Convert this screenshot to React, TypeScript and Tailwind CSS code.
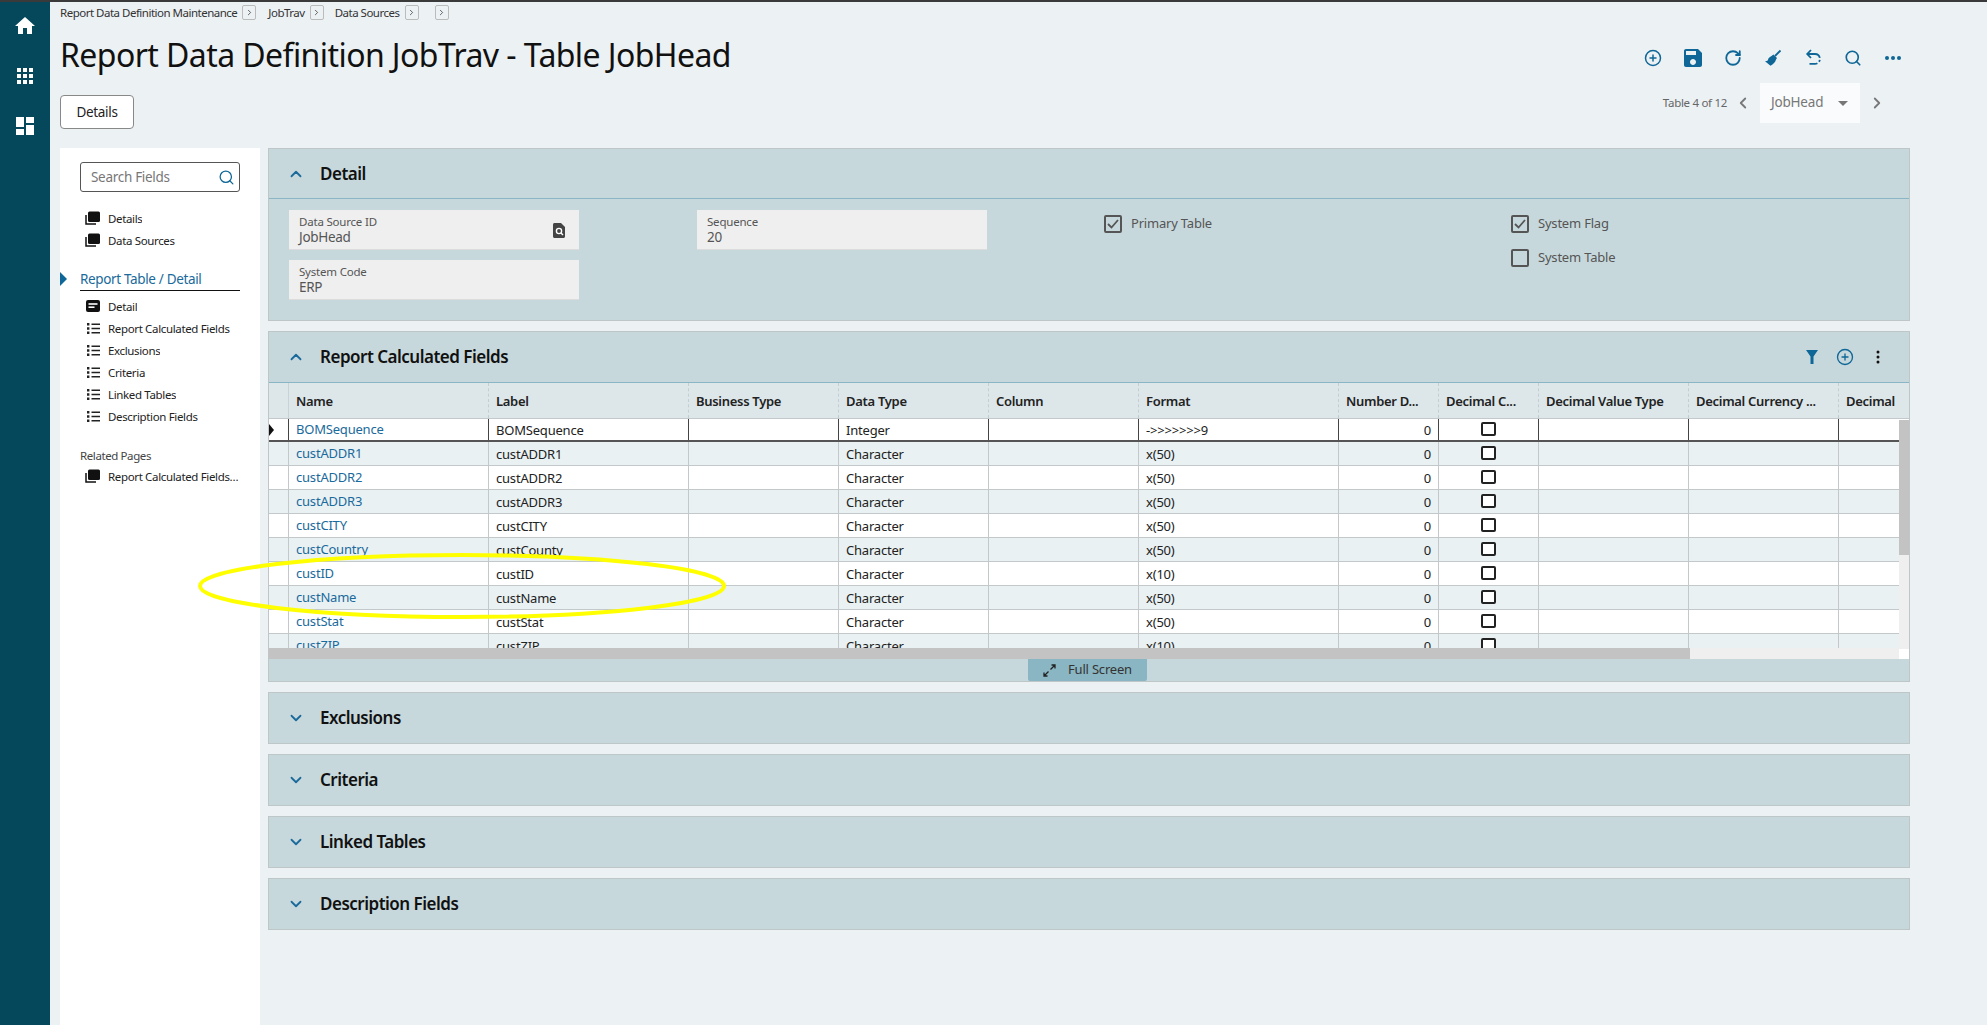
import { CirclePlus, RotateCw, Search, ChevronUp, ChevronDown, ChevronLeft, ChevronRight } from "lucide-react";

const rows = [
  { name: "BOMSequence", label: "BOMSequence", type: "Integer", format: "->>>>>>>9" },
  { name: "custADDR1", label: "custADDR1", type: "Character", format: "x(50)" },
  { name: "custADDR2", label: "custADDR2", type: "Character", format: "x(50)" },
  { name: "custADDR3", label: "custADDR3", type: "Character", format: "x(50)" },
  { name: "custCITY", label: "custCITY", type: "Character", format: "x(50)" },
  { name: "custCountry", label: "custCounty", type: "Character", format: "x(50)" },
  { name: "custID", label: "custID", type: "Character", format: "x(10)" },
  { name: "custName", label: "custName", type: "Character", format: "x(50)" },
  { name: "custStat", label: "custStat", type: "Character", format: "x(50)" },
  { name: "custZIP", label: "custZIP", type: "Character", format: "x(10)" },
];

const headers = ["Name", "Label", "Business Type", "Data Type", "Column", "Format", "Number D...", "Decimal C...", "Decimal Value Type", "Decimal Currency ..."];

const gridCols = "grid grid-cols-[20px_200px_200px_150px_150px_150px_200px_100px_100px_150px_150px_130px]";

function StackIcon() {
  return (
    <svg width="16" height="14" viewBox="0 0 16 14" className="shrink-0">
      <path d="M1 4v9h10" fill="none" stroke="#111" strokeWidth="1.5" />
      <rect x="3" y="0.5" width="12" height="10.5" rx="1.5" fill="#111" />
    </svg>
  );
}

function CardIcon() {
  return (
    <svg width="14" height="12" viewBox="0 0 14 12" className="shrink-0 ml-[1px] mr-[1px]">
      <rect width="14" height="12" rx="2" fill="#111" />
      <rect x="2.5" y="3.2" width="9" height="1.6" fill="#fff" />
      <rect x="2.5" y="6.4" width="6" height="1.6" fill="#fff" />
    </svg>
  );
}

function ListIcon() {
  return (
    <svg width="13" height="11" viewBox="0 0 13 11" className="shrink-0 ml-[2px] mr-[1px]">
      <path d="M0 0h2.4v2.4H0zM0 4.3h2.4v2.4H0zM0 8.6h2.4V11H0z" fill="#222" />
      <path d="M4.5 .4H13v1.5H4.5zM4.5 4.7H13v1.5H4.5zM4.5 9H13v1.5H4.5z" fill="#222" />
    </svg>
  );
}

function NavItem({ icon, text }: { icon: React.ReactNode; text: string }) {
  return (
    <div className="flex items-center h-[22px] pl-[25px] gap-[7px] text-[11.5px] text-[#222] tracking-[-0.35px]">
      {icon}
      <span className="truncate pt-[1px]">{text}</span>
    </div>
  );
}

function Crumb({ text, className }: { text?: string; className?: string }) {
  return (
    <div className={`flex items-center gap-[5px] ${className ?? ""}`}>
      {text && <span className="pt-[1px] text-[11.5px] text-[#333] tracking-[-0.5px]">{text}</span>}
      <span className="flex items-center justify-center w-[14px] h-[15px] border border-[#bbb] rounded-[2px]">
        <ChevronRight size={9} strokeWidth={2} className="text-[#333]" />
      </span>
    </div>
  );
}

function Field({ label, value, lookup, className }: { label: string; value: string; lookup?: boolean; className?: string }) {
  return (
    <div className={`relative flex flex-col justify-center w-[290px] h-[40px] bg-[#efefef] border-b border-[#dcdcdc] pl-[10px] pt-[1px] ${className ?? ""}`}>
      <span className="text-[11.5px] leading-[15px] text-[#555] tracking-[-0.2px]">{label}</span>
      <span className="text-[13.5px] leading-[17px] text-[#555] tracking-[-0.3px]">{value}</span>
      {lookup && (
        <svg width="12" height="15" viewBox="0 0 12 15" className="absolute right-[14px] top-[13px]">
          <path d="M0 1.5C0 .7.7 0 1.5 0H8l4 4v9.5c0 .8-.7 1.5-1.5 1.5h-9C.7 15 0 14.3 0 13.5z" fill="#444" />
          <circle cx="6" cy="8" r="2.6" fill="none" stroke="#fff" strokeWidth="1.4" />
          <path d="M8 10l2 2" stroke="#fff" strokeWidth="1.4" />
        </svg>
      )}
    </div>
  );
}

function Check({ label, checked, className }: { label: string; checked?: boolean; className?: string }) {
  return (
    <div className={`flex items-center gap-[9px] ${className ?? ""}`}>
      <span className="flex items-center justify-center w-[18px] h-[18px] border-2 border-[#555] rounded-[2px]">
        {checked && (
          <svg width="12" height="10" viewBox="0 0 12 10">
            <path d="M1 5l3.5 3.5L11 1" fill="none" stroke="#555" strokeWidth="1.8" />
          </svg>
        )}
      </span>
      <span className="text-[13px] text-[#555] tracking-[-0.2px]">{label}</span>
    </div>
  );
}

function PanelHead({ title, open, height }: { title: string; open?: boolean; height?: string }) {
  return (
    <div className={`flex items-center pl-[18px] ${height ?? "h-[50px]"}`}>
      {open ? <ChevronUp size={18} strokeWidth={2.4} className="text-[#1a6a9c]" /> : <ChevronDown size={18} strokeWidth={2.4} className="text-[#1a6a9c]" />}
      <span className="ml-[15px] text-[17px] font-semibold text-[#111] tracking-[-0.5px]">{title}</span>
    </div>
  );
}

function Collapsed({ title }: { title: string }) {
  return (
    <div className="h-[52px] bg-[#c7d8dc] border border-[#bfc6c8]">
      <PanelHead title={title} />
    </div>
  );
}

export default function App() {
  return (
    <div className="relative flex w-[1987px] h-[1025px] overflow-hidden bg-[#ecf1f4] border-t-2 border-[#3a3a3a] font-['Noto_Sans',sans-serif]">
      <aside className="flex flex-col items-center w-[50px] shrink-0 bg-[#05485b] pt-[12px] gap-[27px] text-white">
        <svg width="24" height="24" viewBox="0 0 24 24" fill="#fff"><path d="M10 20v-6h4v6h5v-8h3L12 3 2 12h3v8z" /></svg>
        <svg width="24" height="24" viewBox="0 0 24 24" fill="#fff" className="mt-[-1px]"><path d="M4 8h4V4H4v4zm6 12h4v-4h-4v4zm-6 0h4v-4H4v4zm0-6h4v-4H4v4zm6 0h4v-4h-4v4zm6-10v4h4V4h-4zm-6 4h4V4h-4v4zm6 6h4v-4h-4v4zm0 6h4v-4h-4v4z" /></svg>
        <svg width="24" height="24" viewBox="0 0 24 24" fill="#fff" className="mt-[-1px]"><path d="M3 13h8V3H3v10zm0 8h8v-6H3v6zm10 0h8V11h-8v10zm0-18v6h8V3h-8z" /></svg>
      </aside>

      <main className="flex-1 flex flex-col pl-[10px]">
        <header className="flex justify-between h-[146px] shrink-0">
          <div>
            <div className="flex items-center h-[15px] mt-[3px]">
              <Crumb text="Report Data Definition Maintenance" />
              <Crumb text="JobTrav" className="ml-[12px]" />
              <Crumb text="Data Sources" className="ml-[11px]" />
              <Crumb className="ml-[16px]" />
            </div>
            <h1 className="mt-[14px] text-[32px] leading-[42px] text-[#111] tracking-[-0.58px]">Report Data Definition JobTrav - Table JobHead</h1>
            <button className="mt-[19px] w-[74px] h-[34px] bg-white border border-[#888] rounded-[4px] text-[13.5px] text-[#222] tracking-[-0.3px]">Details</button>
          </div>
          <div className="flex flex-col items-end pr-[85px]">
            <div className="flex items-center gap-[22px] mt-[46px] h-[20px] text-[#0f6797]">
              <CirclePlus size={18} strokeWidth={2} />
              <svg width="18" height="18" viewBox="3 3 18 18" fill="#0f6797"><path d="M17 3H5c-1.11 0-2 .9-2 2v14c0 1.1.89 2 2 2h14c1.1 0 2-.9 2-2V7l-4-4zm-5 16c-1.66 0-3-1.34-3-3s1.34-3 3-3 3 1.34 3 3-1.34 3-3 3zm3-10H5V5h10v4z" /></svg>
              <RotateCw size={18} strokeWidth={2.4} />
              <svg width="18" height="18" viewBox="0 0 18 18" fill="#0f6797">
                <path d="M16.5 1.5L11 7" fill="none" stroke="#0f6797" strokeWidth="1.8" />
                <path d="M9.5 5.5l3.5 3.5-1 1.5c-.6 2.6-2.8 5-5.5 6.2L1 12.2c1.2 0 2.2-.5 3-1-.1-1.4 1.2-3.2 3.5-4.2z" />
              </svg>
              <svg width="18" height="18" viewBox="0 0 18 18" fill="none" stroke="#0f6797" strokeWidth="1.8">
                <path d="M7 1L3.2 5 7 9" />
                <path d="M3.5 5h7.5a4.8 4.8 0 0 1 0 9.8H5.5" strokeDasharray="14 2 2 2 10" />
              </svg>
              <Search size={18} strokeWidth={2.2} />
              <svg width="18" height="18" viewBox="0 0 18 18" fill="#0f6797">
                <circle cx="3" cy="9" r="2" /><circle cx="9" cy="9" r="2" /><circle cx="15" cy="9" r="2" />
              </svg>
            </div>
            <div className="flex items-center mt-[15px]">
              <span className="text-[11.5px] text-[#666] tracking-[-0.3px]">Table 4 of 12</span>
              <ChevronLeft size={18} strokeWidth={2.4} className="ml-[7px] text-[#777]" />
              <div className="flex items-center justify-between w-[100px] h-[40px] ml-[8px] pl-[11px] pr-[12px] bg-[#f9fbfc] text-[13.5px] text-[#777] tracking-[-0.2px]">
                <span className="pb-[1px]">JobHead</span>
                <span className="w-0 h-0 border-x-[5px] border-x-transparent border-t-[5px] border-t-[#777]" />
              </div>
              <ChevronRight size={18} strokeWidth={2.4} className="ml-[8px] mr-[16px] text-[#777]" />
            </div>
          </div>
        </header>

        <div className="flex flex-1 gap-[8px]">
          <nav className="w-[200px] bg-white pt-[14px]">
            <div className="flex items-center justify-between w-[160px] h-[30px] ml-[20px] pl-[10px] pr-[4px] border border-[#555] rounded-[3px]">
              <span className="text-[13.5px] text-[#777] tracking-[-0.3px]">Search Fields</span>
              <Search size={17} strokeWidth={1.8} className="text-[#0f6797]" />
            </div>
            <div className="mt-[15px]">
              <NavItem icon={<StackIcon />} text="Details" />
              <NavItem icon={<StackIcon />} text="Data Sources" />
            </div>
            <div className="relative flex items-center h-[23px] mt-[17px] ml-[20px] w-[160px] pt-[1px] border-b border-[#111] text-[13.5px] text-[#1a6a9c] tracking-[-0.35px]">
              <span className="absolute left-[-20px] top-[4px] w-0 h-0 border-y-[7px] border-y-transparent border-l-[7px] border-l-[#0f6797]" />
              Report Table / Detail
            </div>
            <div className="mt-[4px]">
              <NavItem icon={<CardIcon />} text="Detail" />
              <NavItem icon={<ListIcon />} text="Report Calculated Fields" />
              <NavItem icon={<ListIcon />} text="Exclusions" />
              <NavItem icon={<ListIcon />} text="Criteria" />
              <NavItem icon={<ListIcon />} text="Linked Tables" />
              <NavItem icon={<ListIcon />} text="Description Fields" />
            </div>
            <div className="mt-[20px] pl-[20px] text-[11.5px] text-[#444] tracking-[-0.4px]">Related Pages</div>
            <div className="mt-[1px] pr-[20px]">
              <NavItem icon={<StackIcon />} text="Report Calculated Fields Maintenance" />
            </div>
          </nav>

          <div className="flex flex-col gap-[10px] w-[1642px]">
            <section className="h-[173px] bg-[#c7d8dc] border border-[#bfc6c8]">
              <div className="border-b border-[#8ab5c5]">
                <PanelHead title="Detail" open height="h-[49px]" />
              </div>
              <div className="flex pt-[11px] pl-[20px]">
                <div className="flex flex-col gap-[10px]">
                  <Field label="Data Source ID" value="JobHead" lookup />
                  <Field label="System Code" value="ERP" />
                </div>
                <Field label="Sequence" value="20" className="ml-[118px]" />
                <Check label="Primary Table" checked className="ml-[117px] h-[18px] mt-[5px]" />
                <div className="flex flex-col gap-[16px] ml-[299px] mt-[5px]">
                  <Check label="System Flag" checked className="h-[18px]" />
                  <Check label="System Table" className="h-[18px]" />
                </div>
              </div>
            </section>

            <section className="h-[351px] bg-[#c7d8dc] border border-[#bfc6c8]">
              <div className="flex items-center justify-between pr-[27px] border-b border-[#8ab5c5]">
                <PanelHead title="Report Calculated Fields" open />
                <div className="flex items-center">
                  <svg width="12" height="14" viewBox="0 0 12 14" fill="#0f6797"><path d="M0 0h12L7.5 6.5V14h-3V6.5z" /></svg>
                  <CirclePlus size={18} strokeWidth={1.8} className="ml-[18px] text-[#0f6797]" />
                  <svg width="8" height="14" viewBox="0 0 8 14" fill="#111" className="ml-[20px]">
                    <circle cx="4" cy="2" r="1.5" /><circle cx="4" cy="7" r="1.5" /><circle cx="4" cy="12" r="1.5" />
                  </svg>
                </div>
              </div>
              <div className="relative h-[276px] bg-white overflow-hidden">
                <div className="h-[265px] overflow-hidden">
                  <div className={`${gridCols} h-[36px] bg-[#dde7ea] border-b border-[#c3c8ca]`}>
                    <div className="border-r border-[#c9d3d6]" />
                    {headers.map((h) => (
                      <div key={h} className="flex items-center px-[7px] pt-[2px] border-r border-dashed border-[#c3ced2] text-[13px] font-semibold text-[#222] tracking-[-0.3px] overflow-hidden whitespace-nowrap">{h}</div>
                    ))}
                    <div className="flex items-center pl-[7px] pt-[2px] text-[13px] font-semibold text-[#222] tracking-[-0.3px]">
                      <span className="w-[52px] overflow-hidden whitespace-nowrap">Decimal Currency</span>
                    </div>
                  </div>
                  {rows.map((r, i) => {
                    const first = i === 0;
                    const line = first ? "border-r border-[#444]" : "border-r border-[#c3c8ca]";
                    const cell = `flex items-center px-[7px] pt-[2px] ${line} overflow-hidden whitespace-nowrap text-[13px] text-[#222] tracking-[-0.2px]`;
                    return (
                      <div key={r.name} className={`${gridCols} ${first ? "h-[23px] bg-white border-b-2 border-[#555]" : i % 2 ? "h-[24px] bg-[#e9f1f3] border-b border-[#c3c8ca]" : "h-[24px] bg-white border-b border-[#c3c8ca]"}`}>
                        <div className={`relative ${line}`}>
                          {first && <span className="absolute left-0 top-[5px] w-0 h-0 border-y-[6px] border-y-transparent border-l-[5px] border-l-[#111]" />}
                        </div>
                        <div className={cell}><span className="text-[#1a6a9c] pb-[1px]">{r.name}</span></div>
                        <div className={cell}>{r.label}</div>
                        <div className={cell} />
                        <div className={cell}>{r.type}</div>
                        <div className={cell} />
                        <div className={cell}>{r.format}</div>
                        <div className={`${cell} justify-end`}>0</div>
                        <div className={`${cell} justify-center`}>
                          <span className="shrink-0 w-[15px] h-[14px] mb-[3px] border-2 border-[#222] rounded-[2px] bg-white" />
                        </div>
                        <div className={cell} />
                        <div className={cell} />
                        <div className={cell} />
                      </div>
                    );
                  })}
                </div>
                <div className="flex h-[11px] w-[1630px] bg-[#efefef]">
                  <div className="w-[1421px] bg-[#c3c3c3]" />
                </div>
                <div className="absolute right-0 top-[37px] bottom-[10px] w-[10px] bg-[#efefef]">
                  <div className="h-[135px] bg-[#c3c3c3]" />
                </div>
              </div>
              <div className="flex justify-center">
                <button className="flex items-center justify-center gap-[12px] w-[119px] h-[22px] ml-[-3px] bg-[#8ab5c2] rounded-b-[2px] text-[13px] text-[#333] tracking-[-0.2px]">
                  <svg width="13" height="13" viewBox="0 0 13 13" fill="none" stroke="#222" strokeWidth="1.3">
                    <path d="M7.5 5.5L12 1M8.5 1H12v3.5M5.5 7.5L1 12M1 8.5V12h3.5" />
                  </svg>
                  Full Screen
                </button>
              </div>
            </section>

            <Collapsed title="Exclusions" />
            <Collapsed title="Criteria" />
            <Collapsed title="Linked Tables" />
            <Collapsed title="Description Fields" />
          </div>
        </div>
      </main>

      {/* yellow marker drawn over the grid */}
      <svg className="absolute left-[198px] top-[550px] pointer-events-none" width="530" height="70" viewBox="0 0 530 70" fill="none">
        <ellipse cx="264" cy="34" rx="262" ry="31" stroke="#ffff00" strokeWidth="4" />
      </svg>
    </div>
  );
}
